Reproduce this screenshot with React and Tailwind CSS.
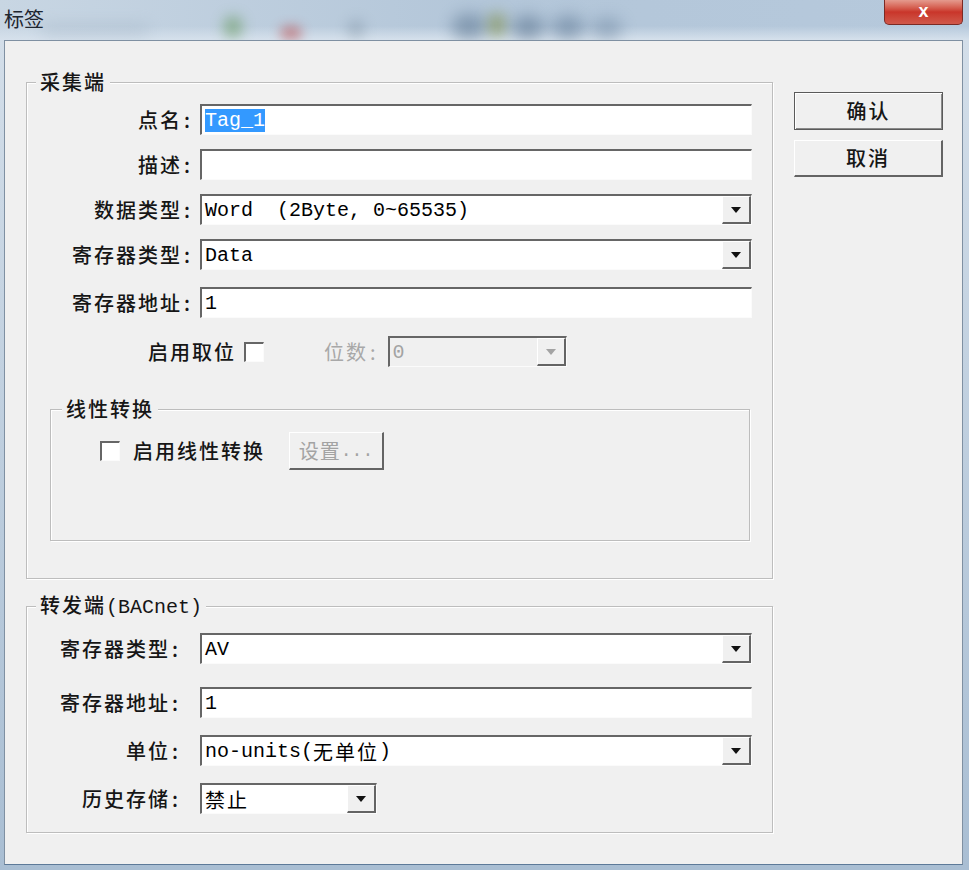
import React from 'react'

const cjk = "font-['Noto_Sans_CJK_SC',sans-serif]"
const mono = "font-['Liberation_Mono','Noto_Sans_CJK_SC',monospace]"

const sunken =
  'border-t-2 border-l-2 border-b border-r border-t-[#666666] border-l-[#666666] border-b-[#fbfbfb] border-r-[#fbfbfb]'
const raised =
  'border-t border-l border-b-2 border-r-2 border-t-white border-l-white border-b-[#646464] border-r-[#646464]'

function Arrow({ disabled }) {
  return (
    <svg width="10" height="6" viewBox="0 0 10 6">
      <path d="M0 0h10L5 6z" fill={disabled ? '#a3a3a3' : '#111'} />
    </svg>
  )
}

function Label({ text, pr = 'pr-[10px]' }) {
  return (
    <div className={`w-[173px] shrink-0 flex justify-end items-center ${pr} text-[20px] leading-[26px] font-medium text-[#161616]`}>
      <span className="tracking-[2px]">{text}</span>
      <span className="ml-[2px]">:</span>
    </div>
  )
}

function TextBox({ children }) {
  return (
    <div className={`w-[552px] h-[31px] flex items-center pl-[3px] bg-white ${sunken} ${mono} text-[20px] leading-[23px] whitespace-pre text-black`}>
      {children}
    </div>
  )
}

function Select({ children, w = 'w-[552px]', disabled }) {
  return (
    <div className={`${w} h-[31px] flex ${sunken} ${disabled ? 'bg-[#f0f0f0] text-[#a3a3a3]' : 'bg-white text-black'}`}>
      <div className={`flex-1 flex items-center pl-[3px] ${mono} text-[20px] leading-[23px] whitespace-pre`}>
        {children}
      </div>
      <div className={`w-[29px] flex items-center justify-center bg-[#f0f0f0] ${raised}`}>
        <Arrow disabled={disabled} />
      </div>
    </div>
  )
}

function Check() {
  return <div className={`w-[20px] h-[20px] bg-white ${sunken}`} />
}

function Row({ label, pr, mt, children }) {
  return (
    <div className={`flex items-center h-[31px] ${mt}`}>
      <Label text={label} pr={pr} />
      {children}
    </div>
  )
}

const fieldset = 'border border-[#bdbdbd] shadow-[inset_1px_1px_0_#ffffff,1px_1px_0_#ffffff]'
const legend = 'bg-[#f0f0f0] px-[4px] text-[20px] leading-[26px] tracking-[2px] font-medium text-[#161616]'

function TitleBar() {
  return (
    <div className="relative h-[40px] shrink-0 overflow-hidden bg-gradient-to-r from-[#c8d6e3] via-[#b3c6d9] to-[#b6c9dc]">
      <div className="absolute inset-x-0 bottom-0 h-[14px] bg-gradient-to-b from-transparent to-[#d6e1ec]" />
      <div className="absolute left-[40px] top-[24px] w-[110px] h-[12px] rounded-full bg-[#8fa3b6] opacity-30 blur-[8px]" />
      <div className="absolute left-[224px] top-[16px] w-[18px] h-[22px] rounded-full bg-[#4f8a3c] opacity-50 blur-[7px]" />
      <div className="absolute left-[280px] top-[26px] w-[22px] h-[14px] rounded-full bg-[#b83a3a] opacity-50 blur-[6px]" />
      <div className="absolute left-[348px] top-[20px] w-[16px] h-[18px] rounded-full bg-[#6b7f90] opacity-40 blur-[7px]" />
      <div className="absolute left-[452px] top-[14px] w-[34px] h-[26px] rounded-full bg-[#46627e] opacity-45 blur-[8px]" />
      <div className="absolute left-[488px] top-[12px] w-[18px] h-[26px] rounded-full bg-[#7b8a3c] opacity-55 blur-[7px]" />
      <div className="absolute left-[512px] top-[16px] w-[32px] h-[24px] rounded-full bg-[#3f5b78] opacity-45 blur-[8px]" />
      <div className="absolute left-[552px] top-[16px] w-[32px] h-[24px] rounded-full bg-[#4a6684] opacity-45 blur-[8px]" />
      <div className="absolute left-[592px] top-[18px] w-[30px] h-[22px] rounded-full bg-[#5b7591] opacity-40 blur-[8px]" />
      <div className={`absolute left-[4px] top-[6px] text-[20px] leading-[26px] text-[#1e2630] ${cjk}`}>标签</div>
      <div className="absolute left-[884px] top-0 w-[79px] h-[25px] rounded-b-[5px] border border-t-0 border-[#7b2a24] bg-gradient-to-b from-[#e49a8e] via-[#c9352a] to-[#d0584a] flex items-center justify-center">
        <span className="font-['Liberation_Sans',sans-serif] font-bold text-[18px] leading-none text-white -mt-[2px]">x</span>
      </div>
    </div>
  )
}

export default function App() {
  return (
    <div className={`w-[969px] h-[870px] flex flex-col bg-[#b9cadb] ${cjk}`}>
      <TitleBar />
      <div className="flex-1 flex pl-[4px] pr-[6px] pb-[5px] bg-gradient-to-b from-[#d3dee9] to-[#a9bed3]">
        <div className="flex-1 flex bg-[#f0f0f0] border border-[#7f90a2] border-b-[#5d7a99]">
          <div className="pl-[21px] pt-[28px]">
            <fieldset className={`w-[747px] h-[510px] ${fieldset}`}>
              <legend className={`ml-[9px] ${legend}`}>采集端</legend>
              <Row label="点名" mt="mt-[9px]">
                <TextBox>
                  <span className="bg-[#3399ff] text-white">Tag_1</span>
                </TextBox>
              </Row>
              <Row label="描述" mt="mt-[14px]">
                <TextBox />
              </Row>
              <Row label="数据类型" mt="mt-[14px]">
                <Select>Word  (2Byte, 0~65535)</Select>
              </Row>
              <Row label="寄存器类型" mt="mt-[14px]">
                <Select>Data</Select>
              </Row>
              <Row label="寄存器地址" mt="mt-[17px]">
                <TextBox>1</TextBox>
              </Row>
              <div className="flex items-center h-[31px] mt-[18px] pl-[121px] text-[20px] leading-[26px]">
                <span className="tracking-[2px] font-medium text-[#161616]">启用取位</span>
                <div className="ml-[8px]">
                  <Check />
                </div>
                <span className="ml-[60px] tracking-[2px] text-[#a8a8a8]">位数</span>
                <span className="ml-[2px] text-[#a8a8a8]">:</span>
                <div className="ml-[12px]">
                  <Select w="w-[179px]" disabled>0</Select>
                </div>
              </div>
              <fieldset className={`mt-[29px] ml-[23px] w-[700px] h-[145px] ${fieldset}`}>
                <legend className={`ml-[11px] ${legend}`}>线性转换</legend>
                <div className="flex items-center mt-[10px] h-[38px]">
                  <div className="ml-[49px]">
                    <Check />
                  </div>
                  <span className="ml-[13px] text-[20px] leading-[26px] tracking-[2px] font-medium text-[#161616]">启用线性转换</span>
                  <div className={`ml-[24px] w-[95px] h-[38px] flex items-center justify-center bg-[#f0f0f0] ${raised} text-[20px] leading-[26px] text-[#a3a3a3]`}>
                    <span className="tracking-[1px]">设置</span>
                    <span className={`${mono} text-[18px]`}>...</span>
                  </div>
                </div>
              </fieldset>
            </fieldset>
            <fieldset className={`mt-[13px] w-[747px] h-[241px] ${fieldset}`}>
              <legend className={`ml-[9px] ${legend}`}>
                转发端<span className={`${mono} tracking-normal font-normal text-[20px]`}>(BACnet)</span>
              </legend>
              <Row label="寄存器类型" pr="pr-[22px]" mt="mt-[12px]">
                <Select>AV</Select>
              </Row>
              <Row label="寄存器地址" pr="pr-[22px]" mt="mt-[23px]">
                <TextBox>1</TextBox>
              </Row>
              <Row label="单位" pr="pr-[22px]" mt="mt-[17px]">
                <Select>
                  no-units(<span className={`${cjk} tracking-[2px]`}>无单位</span>)
                </Select>
              </Row>
              <Row label="历史存储" pr="pr-[22px]" mt="mt-[17px]">
                <Select w="w-[177px]">
                  <span className={`${cjk} tracking-[2px]`}>禁止</span>
                </Select>
              </Row>
            </fieldset>
          </div>
          <div className="ml-[21px] pt-[51px] flex flex-col gap-[10px]">
            <div className="w-[149px] h-[38px] flex items-center justify-center bg-[#f0f0f0] border border-[#5a5a5a] shadow-[inset_1px_1px_0_#ffffff,inset_-1px_-1px_0_#8a8a8a] text-[20px] leading-[26px] tracking-[2px] font-medium text-[#161616]">
              确认
            </div>
            <div className={`w-[149px] h-[37px] flex items-center justify-center bg-[#f0f0f0] ${raised} text-[20px] leading-[26px] tracking-[2px] font-medium text-[#161616]`}>
              取消
            </div>
          </div>
        </div>
      </div>
    </div>
  )
}
